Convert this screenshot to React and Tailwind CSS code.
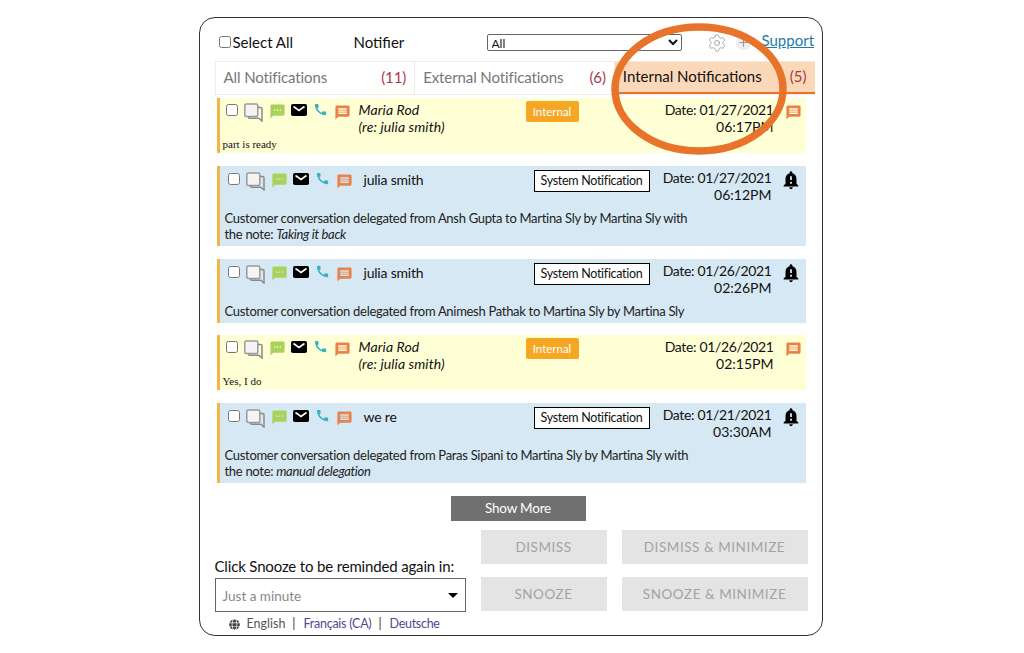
import React from "react";
import { Settings, Plus } from "lucide-react";
import { MdSms, MdMessage, MdCall, MdNotificationImportant } from "react-icons/md";
import { FaGlobe } from "react-icons/fa";

const GrayChat = () => (
  <svg width="19" height="19" viewBox="0 0 19 19" className="shrink-0 ml-[6px]">
    <rect x="0.8" y="1" width="13" height="12.5" rx="1.5" fill="#f4f4f4" stroke="#9a9a9a" strokeWidth="1.5" />
    <path d="M14 4.5h2.5c1 0 1.5.5 1.5 1.4V18l-3.2-2.8H5.8c-.9 0-1.4-.5-1.4-1.3V13.5" fill="none" stroke="#8a8a8a" strokeWidth="1.5" />
  </svg>
);
const Mail = () => (
  <svg width="16" height="12" viewBox="0 0 16 12" className="shrink-0 ml-[5px] mt-[1px]">
    <rect width="16" height="12" rx="1.8" fill="#000" />
    <path d="M2.5 2.5 8 6.5l5.5-4" fill="none" stroke="#fff" strokeWidth="1.6" />
  </svg>
);

const Icons = () => (
  <div className="flex items-start">
    <input type="checkbox" className="w-[12px] h-[12px] m-0 mt-[1px] shrink-0" />
    <GrayChat />
    <MdSms className="shrink-0 ml-[6px] w-[17px] h-[17px] text-[#a8d25a]" />
    <Mail />
    <MdCall className="shrink-0 ml-[6px] w-[15px] h-[15px] -mt-[1px] text-[#35b3c6]" />
    <MdMessage className="shrink-0 ml-[6px] mt-[1px] w-[17px] h-[17px] text-[#e8824a]" />
  </div>
);

const InternalRow = ({ date, time, message }) => (
  <div className="w-[589px] h-[55px] bg-[#ffffd6] border-l-[3px] border-[#f0b449]">
    <div className="h-[39px] flex items-start pl-[6px] pt-[3px]">
      <div className="pt-[2px]"><Icons /></div>
      <div className="ml-[8px] w-[167px] shrink-0 italic text-[14px] leading-[17px] tracking-[0.1px] text-[#111]">
        Maria Rod
        <br />
        (re: julia smith)
      </div>
      <div className="w-[53px] h-[21px] shrink-0 rounded-[2px] bg-[#f5a623] text-white text-[11.5px] flex items-center justify-center">
        Internal
      </div>
      <div className="w-[195px] shrink-0 text-right text-[14px] leading-[17px] text-[#111]">
        <span className="tracking-[-0.35px]">Date: {date}</span>
        <br />
        {time}
      </div>
      <MdMessage className="shrink-0 ml-[11px] mt-[3px] w-[17px] h-[17px] text-[#e8824a]" />
    </div>
    <p className="pl-[3px] text-[11px] leading-[14px] text-[#111] font-['Liberation_Serif',serif]">{message}</p>
  </div>
);

const SystemRow = ({ name, date, time, children, tall }) => (
  <div className={`w-[589px] ${tall ? "h-[80px]" : "h-[64px]"} bg-[#d6e8f3] border-l-[3px] border-[#f0b449]`}>
    <div className="h-[44px] flex items-start pl-[8px] pt-[3px]">
      <div className="pt-[3px]"><Icons /></div>
      <div className="ml-[11px] pt-[2px] w-[170px] shrink-0 text-[14px] leading-[17px] tracking-[-0.2px] text-[#111]">{name}</div>
      <div className="w-[116px] h-[22px] mt-[1px] shrink-0 border border-black bg-white text-[12.5px] tracking-[-0.3px] text-[#111] flex items-center justify-center">
        System Notification
      </div>
      <div className="w-[122px] shrink-0 text-right text-[14px] leading-[17px] text-[#111]">
        <span className="tracking-[-0.35px]">Date: {date}</span>
        <br />
        {time}
      </div>
      <MdNotificationImportant className="shrink-0 ml-[8px] w-[22px] h-[22px] text-black" />
    </div>
    <p className="pl-[5px] w-[480px] text-[13px] leading-[16px] tracking-[-0.3px] text-[#222]">{children}</p>
  </div>
);

const Tab = ({ label, count, active }) => (
  <div
    className={`w-[200px] h-full flex items-center justify-between pl-[8px] pr-[8px] pb-[1px] text-[15px] ${
      active ? "bg-[#fbd9b8] border-b-2 border-[#e8742c] text-[#111]" : "border-r border-[#f3ebe2] text-[#777] tracking-[-0.1px]"
    }`}
  >
    <span>{label}</span>
    <span className="text-[#a83a4a]">{count}</span>
  </div>
);

const GrayBtn = ({ w, children }) => (
  <div className={`${w} h-[34px] bg-[#e4e4e4] text-[#a3a3a3] text-[13.5px] tracking-[0.55px] flex items-center justify-center`}>
    {children}
  </div>
);

export default function App() {
  return (
    <div className="w-[1024px] h-[653px] bg-white pt-[17px] pl-[199px] font-['Lato',sans-serif] overflow-hidden">
      <div className="relative w-[624px] h-[619px] border-[1.5px] border-[#333] rounded-[16px] pl-[14.5px]">
        <div className="h-[43px] flex items-center pl-[4px] text-[15px] text-[#111] pt-[5px]">
          <input type="checkbox" className="w-[12px] h-[12px] m-0 shrink-0" />
          <span className="ml-[2px] w-[121px]">Select All</span>
          <span className="w-[133px]">Notifier</span>
          <select className="w-[195px] h-[17px] mt-[1px] text-[12px] leading-[14px] bg-white border border-[#666] rounded-[2px] font-['Lato',sans-serif]">
            <option>All</option>
          </select>
          <Settings className="ml-[25px] mt-[1px] w-[20px] h-[20px] text-[#999]" strokeWidth={1} />
          <span className="ml-[9px] mt-[1px] w-[15px] h-[15px] rounded-full bg-[#eee] flex items-center justify-center">
            <Plus className="w-[13px] h-[13px] text-[#999]" strokeWidth={2} />
          </span>
          <a className="ml-[11px] -mt-[3px] text-[#1f7ba6] underline text-[15px]">Support</a>
        </div>

        <div className="w-[600px] h-[34px] flex border border-[#f3ebe2] border-r-0">
          <Tab label="All Notifications" count="(11)" />
          <Tab label="External Notifications" count="(6)" />
          <Tab label="Internal Notifications" count="(5)" active />
        </div>

        <div className="ml-[2px] mt-[3px] flex flex-col">
          <InternalRow date="01/27/2021" time="06:17PM" message="part is ready" />
          <div className="h-[13px]" />
          <SystemRow tall name="julia smith" date="01/27/2021" time="06:12PM">
            Customer conversation delegated from Ansh Gupta to Martina Sly by Martina Sly with the note: <i>Taking it back</i>
          </SystemRow>
          <div className="h-[13px]" />
          <SystemRow name="julia smith" date="01/26/2021" time="02:26PM">
            Customer conversation delegated from Animesh Pathak to Martina Sly by Martina Sly
          </SystemRow>
          <div className="h-[12px]" />
          <InternalRow date="01/26/2021" time="02:15PM" message="Yes, I do" />
          <div className="h-[13px]" />
          <SystemRow tall name="we re" date="01/21/2021" time="03:30AM">
            Customer conversation delegated from Paras Sipani to Martina Sly by Martina Sly with the note: <i>manual delegation</i>
          </SystemRow>
        </div>

        <div className="mt-[13px] ml-[236px] w-[135px] h-[25px] bg-[#707070] text-white text-[13.5px] tracking-[-0.2px] flex items-center justify-center">
          Show More
        </div>

        <div className="flex mt-[9px]">
          <div className="w-[266px] shrink-0 pt-[26px]">
            <div className="text-[15px] leading-[20px] tracking-[-0.16px] text-[#111]">Click Snooze to be reminded again in:</div>
            <div className="mt-[2px] w-[251px] h-[34px] border border-[#666] flex items-center justify-between pl-[7px] pr-[7px] pt-[2px] text-[13.5px] text-[#888]">
              <span>Just a minute</span>
              <span className="w-0 h-0 -mt-[2px] border-x-[5.5px] border-x-transparent border-t-[5.5px] border-t-black" />
            </div>
            <div className="mt-[4px] ml-[14px] flex items-center text-[12.5px] leading-[16px]">
              <FaGlobe className="w-[11px] h-[11px] text-[#444]" />
              <span className="ml-[7px] text-[#555]">English</span>
              <span className="ml-[7px] text-[#333]">|</span>
              <span className="ml-[8px] tracking-[-0.25px] text-[#4b4b8f]">Français (CA)</span>
              <span className="ml-[7px] text-[#333]">|</span>
              <span className="ml-[8px] tracking-[-0.3px] text-[#4b4b8f]">Deutsche</span>
            </div>
          </div>
          <div className="grid grid-cols-[126px_186px] gap-x-[15px] gap-y-[13px] content-start">
            <GrayBtn w="w-[126px]">DISMISS</GrayBtn>
            <GrayBtn w="w-[186px]">DISMISS &amp; MINIMIZE</GrayBtn>
            <GrayBtn w="w-[126px]">SNOOZE</GrayBtn>
            <GrayBtn w="w-[186px]">SNOOZE &amp; MINIMIZE</GrayBtn>
          </div>
        </div>

        <svg className="absolute left-[405px] top-[0px] pointer-events-none" width="190" height="145" viewBox="0 0 190 145">
          <ellipse cx="94" cy="71" rx="84" ry="62" fill="none" stroke="#e8742c" strokeWidth="7.5" />
        </svg>
      </div>
    </div>
  );
}
